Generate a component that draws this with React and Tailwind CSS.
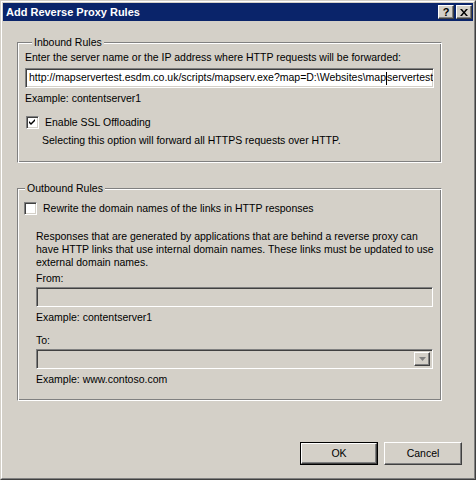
import React from "react";

const raised =
  "border border-t-white border-l-white border-r-[#404040] border-b-[#404040] shadow-[inset_-1px_-1px_0_#808080,inset_1px_1px_0_#d4d0c8]";
const sunken =
  "border border-t-[#808080] border-l-[#808080] border-r-white border-b-white shadow-[inset_1px_1px_0_#404040,inset_-1px_-1px_0_#d4d0c8]";
const etched =
  "border border-t-[#808080] border-l-[#808080] border-r-white border-b-white shadow-[inset_1px_1px_0_#fff,inset_-1px_-1px_0_#808080]";

function Check({ checked }) {
  return (
    <div className={`w-[13px] h-[13px] shrink-0 bg-white ${sunken} flex items-center justify-center`}>
      {checked && (
        <svg width="7" height="7" viewBox="0 0 7 7">
          <path d="M0 2 L2 4 L6 0 L6 2 L2 6 L0 4 Z" fill="#000" />
        </svg>
      )}
    </div>
  );
}

function GroupBox({ label, className, children }) {
  return (
    <div className={`${etched} ${className}`}>
      <div className="-mt-[7px] ml-[7px] px-[2px] w-fit bg-[#d4d0c8] leading-[13px]">{label}</div>
      {children}
    </div>
  );
}

function Button({ children, isDefault }) {
  return (
    <div className={isDefault ? "border border-black" : ""}>
      <div
        className={`${raised} ${isDefault ? "w-[76px] h-[21px]" : "w-[78px] h-[23px]"} flex items-center justify-center`}
      >
        {children}
      </div>
    </div>
  );
}

export default function App() {
  return (
    <div
      className="w-[476px] h-[480px] bg-[#d4d0c8] text-black text-[10.5px] border border-t-[#d4d0c8] border-l-[#d4d0c8] border-r-[#404040] border-b-[#404040]"
      style={{ fontFamily: '"Liberation Sans", Arial, sans-serif' }}
    >
      <div className="h-full flex flex-col border border-t-white border-l-white border-r-[#808080] border-b-[#808080] p-px">
        {/* title bar */}
        <div className="h-[18px] bg-[#0a246a] flex items-center pl-[3px] pr-[1px]">
          <div className="flex-1 text-white font-bold text-[11px]">Add Reverse Proxy Rules</div>
          <div className={`w-[16px] h-[14px] bg-[#d4d0c8] ${raised} flex items-center justify-center font-bold text-[11px] leading-none`}>
            ?
          </div>
          <div className={`ml-[2px] w-[16px] h-[14px] bg-[#d4d0c8] ${raised} flex items-center justify-center`}>
            <svg width="8" height="7" viewBox="0 0 8 7">
              <path d="M0 0 H2 L4 2.5 L6 0 H8 L5 3.5 L8 7 H6 L4 4.5 L2 7 H0 L3 3.5 Z" fill="#000" />
            </svg>
          </div>
        </div>

        <div className="flex flex-col pl-[14px] pr-[31px] pt-[21px]">
          <GroupBox label="Inbound Rules" className="px-[7px] pb-[15px]">
            <div className="mt-[2px] leading-[13px]">
              Enter the server name or the IP address where HTTP requests will be forwarded:
            </div>
            <div className={`mt-[4px] h-[20px] bg-white ${sunken} flex items-center px-[3px] overflow-hidden whitespace-nowrap`}>
              <span className="shrink-0">http://mapservertest.esdm.co.uk/scripts/mapserv.exe?map=D:\Websites\map</span>
              <span className="shrink-0 w-px h-[13px] bg-black" />
              <span className="shrink-0">servertest</span>
            </div>
            <div className="mt-[4px] leading-[13px]">Example: contentserver1</div>
            <div className="mt-[11px] ml-px flex items-center gap-[6px] leading-[13px]">
              <Check checked />
              <span>Enable SSL Offloading</span>
            </div>
            <div className="mt-[5px] ml-[17px] leading-[13px]">
              Selecting this option will forward all HTTPS requests over HTTP.
            </div>
          </GroupBox>

          <GroupBox label="Outbound Rules" className="mt-[25px] pb-[14px]">
            <div className="mt-[7px] ml-[6px] flex items-center gap-[6px] leading-[13px]">
              <Check />
              <span>Rewrite the domain names of the links in HTTP responses</span>
            </div>
            <div className="pl-[18px] pr-[8px]">
              <div className="mt-[15px] -mr-[7px] leading-[13px]">
                Responses that are generated by applications that are behind a reverse proxy can have HTTP links that use
                internal domain names. These links must be updated to use external domain names.
              </div>
              <div className="mt-[3px] leading-[13px]">From:</div>
              <div className={`mt-[2px] h-[20px] ${sunken}`} />
              <div className="mt-[4px] leading-[13px]">Example: contentserver1</div>
              <div className="mt-[10px] leading-[13px]">To:</div>
              <div className={`mt-[2px] h-[20px] ${sunken} flex justify-end p-[2px]`}>
                <div className={`w-[16px] ${raised} flex items-center justify-center`}>
                  <svg width="7" height="4" viewBox="0 0 7 4">
                    <path d="M0 0 H7 L3.5 4 Z" fill="#808080" />
                  </svg>
                </div>
              </div>
              <div className="mt-[4px] leading-[13px]">Example: www.contoso.com</div>
            </div>
          </GroupBox>
        </div>

        <div className="mt-auto mb-[12px] pr-[11px] flex justify-end gap-[6px]">
          <Button isDefault>OK</Button>
          <Button>Cancel</Button>
        </div>
      </div>
    </div>
  );
}
